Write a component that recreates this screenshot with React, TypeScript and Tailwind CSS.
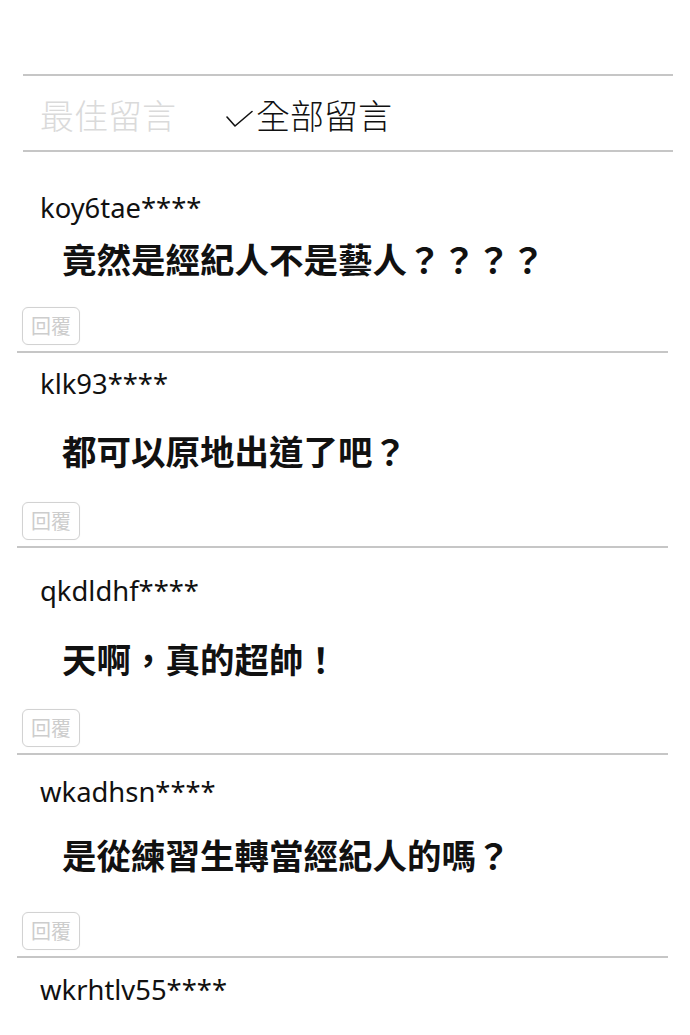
const comments = [
  { user: "koy6tae****", text: "竟然是經紀人不是藝人？？？？", top: "mt-[42px]", mid: "mt-[20px]", bottom: "mt-[31px]" },
  { user: "klk93****", text: "都可以原地出道了吧？", top: "mt-[17px]", mid: "mt-[36px]", bottom: "mt-[34px]" },
  { user: "qkdldhf****", text: "天啊，真的超帥！", top: "mt-[29px]", mid: "mt-[37px]", bottom: "mt-[33px]" },
  { user: "wkadhsn****", text: "是從練習生轉當經紀人的嗎？", top: "mt-[23px]", mid: "mt-[32px]", bottom: "mt-[40px]" },
];

const sans = "font-['Noto_Sans','Noto_Sans_CJK_TC',sans-serif]";
const cjk = "font-['Noto_Sans_CJK_TC','Noto_Sans',sans-serif]";

function ReplyButton() {
  return (
    <button className={`flex h-[38px] w-[58px] items-center justify-center rounded-[6px] border-[1.5px] border-[#d2d2d2] bg-white text-[20px] leading-none text-[#cdcdcd] shadow-[0_0_2px_rgba(0,0,0,0.04)] ${cjk}`}>
      回覆
    </button>
  );
}

function Check() {
  return (
    <svg width="27" height="17" viewBox="0 0 27 17" className="mt-[12px] shrink-0" fill="none">
      <path d="M1 7 L9 16 L26 1.5" stroke="#111" strokeWidth="1.6" strokeLinecap="round" strokeLinejoin="round" />
    </svg>
  );
}

export default function App() {
  return (
    <div className="min-h-[1035px] w-[690px] overflow-hidden bg-white">
      <div className="ml-[23px] mr-[17px] mt-[74px] border-y-2 border-[#c6c6c6]">
        <div className={`flex h-[74px] items-start pt-[22px] text-[34px] font-light leading-none ${cjk}`}>
          <span className="ml-[17px] text-[#dadada]">最佳留言</span>
          <span className="ml-[50px] flex items-start gap-[3px] text-[#111]">
            <Check />
            全部留言
          </span>
        </div>
      </div>

      {comments.map((c) => (
        <div key={c.user} className="ml-[17px] mr-[22px] border-b-2 border-[#c6c6c6] pb-[6px]">
          <div className={`${c.top} ml-[23px] text-[27.4px] leading-[27px] text-[#111] ${sans}`}>{c.user}</div>
          <div className={`${c.mid} ml-[45px] text-[34.5px] font-bold leading-[35px] text-[#111] ${cjk}`}>{c.text}</div>
          <div className={`${c.bottom} pl-[5px]`}>
            <ReplyButton />
          </div>
        </div>
      ))}

      <div className={`ml-[40px] mt-[18px] text-[27.4px] leading-[27px] text-[#111] ${sans}`}>wkrhtlv55****</div>
    </div>
  );
}
